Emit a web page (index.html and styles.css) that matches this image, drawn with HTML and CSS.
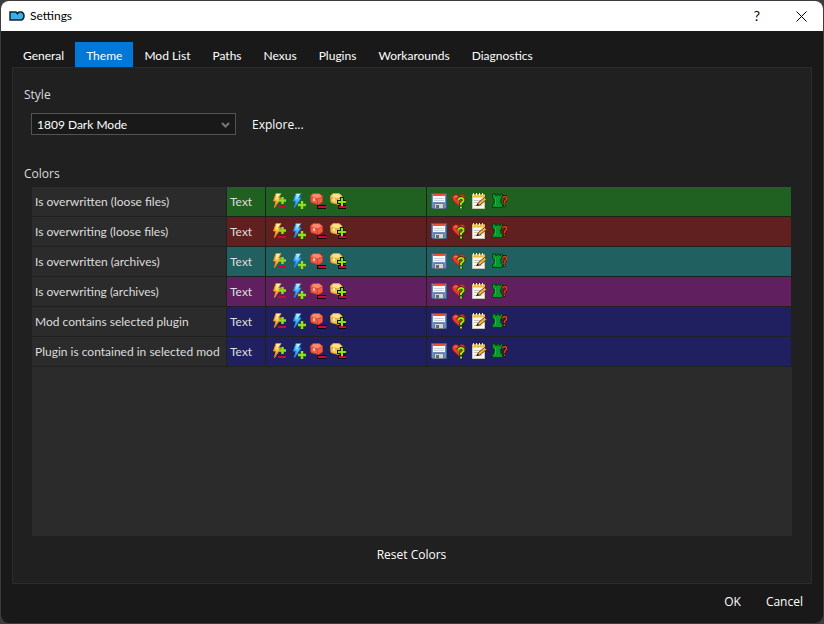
FILE: index.html
```html
<!DOCTYPE html>
<html lang="en">
<head>
<meta charset="utf-8">
<title>Settings</title>
<link rel="stylesheet" href="styles.css">
</head>
<body>
<svg class="defs" aria-hidden="true">
  <defs>
    <linearGradient id="g-fire" x1="0" y1="0" x2="0" y2="1"><stop offset="0" stop-color="#fff3a0"/><stop offset=".5" stop-color="#ffc050"/><stop offset="1" stop-color="#f08010"/></linearGradient>
    <linearGradient id="g-ice" x1="0" y1="0" x2="0" y2="1"><stop offset="0" stop-color="#b8ecff"/><stop offset=".5" stop-color="#48b8ff"/><stop offset="1" stop-color="#1484e8"/></linearGradient>
  </defs>
  <symbol id="fire" viewBox="0 0 16 16">
    <path d="M6 .5h5L8.500 5H11L4.500 14.500 6 8H3.500z" fill="url(#g-fire)" stroke="#e88c18"/>
    <path d="M7 1.500h2L7 5.500" fill="none" stroke="#fff8c0"/>
    <path d="M12.500 4v7M9 7.500h7" stroke="#589010" stroke-width="3"/>
    <path d="M12.500 4v7M9 7.500h7" stroke="#8ce020" stroke-width="2"/>
    <path d="M8 14h8" stroke="#c80838" stroke-width="2"/>
  </symbol>
  <symbol id="ice" viewBox="0 0 16 16">
    <path d="M6 .5h5L8.500 5H11L4.500 14.500 6 8H3.500z" fill="url(#g-ice)" stroke="#2090e8"/>
    <path d="M7 1.500h2L7 5.500" fill="none" stroke="#d0f4ff"/>
    <path d="M12 8v8M8 12h8" stroke="#589010" stroke-width="3"/>
    <path d="M12 8v8M8 12h8" stroke="#8ce020" stroke-width="2"/>
  </symbol>
  <symbol id="redbox" viewBox="0 0 16 16">
    <path d="M.5 3 3 .500h6L12.500 3v6L8.500 11.500 1 9.500z" fill="#f45c44" stroke="#d03c2c"/>
    <path d="M1.500 3 3.500 1H9l3 2.500-4.500 2z" fill="#ff8870"/>
    <path d="M7.500 6v5M1 5l6.500 1 4.500-2" fill="none" stroke="#d84434"/>
    <path d="M4 5v3" stroke="#ffd8d0" stroke-width="1.500"/>
    <path d="M7 12h9v4H7z" fill="#100808"/><path d="M8 13h8v2H8z" fill="#d00840"/>
  </symbol>
  <symbol id="goldbox" viewBox="0 0 16 16">
    <path d="M.5 3 3 .500h6L12 3v6L8.500 11.500 1 9.500z" fill="#f8c450" stroke="#dc9c2c"/>
    <path d="M1.500 3 3.500 1H9l2.500 2.500-4 2z" fill="#ffe08c"/>
    <path d="M7.500 6v5M1 5l6.500 1 4-2" fill="none" stroke="#dca030"/>
    <path d="M4 5v3" stroke="#fff8d8" stroke-width="1.500"/>
    <path d="M12 4v10M7 9h10" stroke="#102000" stroke-width="4"/>
    <path d="M8 12h9v4H8z" fill="#100808"/><path d="M9 13h7v2H9z" fill="#d00840"/>
    <path d="M12 5v8M8 9h8" stroke="#90e020" stroke-width="2"/>
  </symbol>
  <symbol id="floppy" viewBox="0 0 16 16">
    <path d="M.5.500h15v15h-14l-1-1z" fill="#6c8cbc" stroke="#3c5c94"/>
    <path d="M2 1h12v8H2z" fill="#f8f8fc"/><path d="M2 1h12v2H2z" fill="#f05030"/>
    <path d="M3 5.500h10M3 7.500h10" stroke="#c8d0dc"/>
    <path d="M3.500 10.500h9v5h-9z" fill="#d0d4d8" stroke="#707880"/><path d="M5 12h3v3H5z" fill="#606870"/>
  </symbol>
  <symbol id="heart" viewBox="0 0 16 16">
    <path d="M8 3.500C6 .500 1.500 1.500 1.500 5c0 3 4 5.500 6.500 8 2.500-2.500 6-5 6-8 0-3.500-4-4.500-6-1.500z" fill="#ec3c28" stroke="#b81c14"/>
    <path d="M3 4.500Q4 2.500 6 3.500" fill="none" stroke="#ff9880"/>
    <path d="M7 7.500Q8 5 10 5q3 0 2.500 3L10 10.500V12M10 13.500v2" fill="none" stroke="#142800" stroke-width="3.500"/>
    <path d="M7 7.500Q8 5 10 5q3 0 2.500 3L10 10.500V12M10 13.500v2" fill="none" stroke="#98e418" stroke-width="2"/>
  </symbol>
  <symbol id="note" viewBox="0 0 16 16">
    <path d="M1.500 2h12v13.500h-12z" fill="#f8f8f0" stroke="#c8c4b4"/>
    <path d="M1 1.500h13v3H1z" fill="#f0bc40"/>
    <path d="M2.500 0v3M5.500 0v3M8.500 0v3M11.500 0v3" stroke="#fff0a8"/>
    <path d="M3 7.500h8M3 9.500h6M3 12.500h8" stroke="#c4c4c4"/>
    <path d="M6 12.500 7.500 9.500 13.500 4.500l2 2L9 12z" fill="#f0b444" stroke="#684010"/>
    <path d="m5 13 1.500-2.500 1.500 1.500z" fill="#201008"/>
  </symbol>
  <symbol id="rook" viewBox="0 0 16 16">
    <path d="M1.500 1h3v1.500H6V1h2v1.500h1.500V1h2v4L9.500 6.500l.5 4 1.500 1v3h-10v-3l1.500-1 .5-4-2-1.500z" fill="#08982c" stroke="#044010"/>
    <path d="M4.500 5v7" stroke="#20b838"/>
    <path d="M11.500 5.500Q12 3.500 13.500 3.500q2.500 0 2 3L13.500 8.500v1.500M13.500 11.500v2" fill="none" stroke="#300800" stroke-width="3"/>
    <path d="M11.500 5.500Q12 3.500 13.500 3.500q2.500 0 2 3L13.500 8.500V10M13.500 11.500v1.500" fill="none" stroke="#e04410" stroke-width="1.500"/>
  </symbol>
</svg>
<main class="dialog">
  <header class="titlebar">
    <svg class="logo" viewBox="0 0 16 10" aria-hidden="true"><path d="M1 1h6l1.500 1L10 1h2.500Q15 2 15 5t-2.500 4H1z" fill="#38b0e8" stroke="#12252e" stroke-width="1.500"/><path d="m7 1.500 1.500 2L10 1.500" fill="none" stroke="#12252e"/></svg>
    <h1>Settings</h1>
    <button class="winbtn help" aria-label="Help">?</button>
    <button class="winbtn" aria-label="Close"><svg width="11" height="11" viewBox="0 0 11 11"><path d="m.5.500 10 10m0-10-10 10" stroke="#000"/></svg></button>
  </header>
  <nav class="tabs">
    <button>General</button><button class="active">Theme</button><button>Mod List</button><button>Paths</button><button>Nexus</button><button>Plugins</button><button>Workarounds</button><button>Diagnostics</button>
  </nav>
  <section class="panel">
    <label class="heading" for="style">Style</label>
    <div class="style-row">
      <div class="combo"><select id="style"><option>1809 Dark Mode</option></select><svg viewBox="0 0 9 6" aria-hidden="true"><path d="m1 1 3.500 3.500L8 1" fill="none" stroke="#777" stroke-width="2"/></svg></div>
      <button>Explore...</button>
    </div>
    <h2 class="heading">Colors</h2>
    <div class="table-area">
      <table>
        <colgroup><col class="c-name"><col class="c-text"><col class="c-content"><col></colgroup>
        <tbody>
          <tr class="green"><th scope="row">Is overwritten (loose files)</th><td>Text</td><td><div class="icons"><svg><use href="#fire"/></svg><svg><use href="#ice"/></svg><svg><use href="#redbox"/></svg><svg><use href="#goldbox"/></svg></div></td><td><div class="icons"><svg><use href="#floppy"/></svg><svg><use href="#heart"/></svg><svg><use href="#note"/></svg><svg><use href="#rook"/></svg></div></td></tr>
          <tr class="red"><th scope="row">Is overwriting (loose files)</th><td>Text</td><td><div class="icons"><svg><use href="#fire"/></svg><svg><use href="#ice"/></svg><svg><use href="#redbox"/></svg><svg><use href="#goldbox"/></svg></div></td><td><div class="icons"><svg><use href="#floppy"/></svg><svg><use href="#heart"/></svg><svg><use href="#note"/></svg><svg><use href="#rook"/></svg></div></td></tr>
          <tr class="teal"><th scope="row">Is overwritten (archives)</th><td>Text</td><td><div class="icons"><svg><use href="#fire"/></svg><svg><use href="#ice"/></svg><svg><use href="#redbox"/></svg><svg><use href="#goldbox"/></svg></div></td><td><div class="icons"><svg><use href="#floppy"/></svg><svg><use href="#heart"/></svg><svg><use href="#note"/></svg><svg><use href="#rook"/></svg></div></td></tr>
          <tr class="purple"><th scope="row">Is overwriting (archives)</th><td>Text</td><td><div class="icons"><svg><use href="#fire"/></svg><svg><use href="#ice"/></svg><svg><use href="#redbox"/></svg><svg><use href="#goldbox"/></svg></div></td><td><div class="icons"><svg><use href="#floppy"/></svg><svg><use href="#heart"/></svg><svg><use href="#note"/></svg><svg><use href="#rook"/></svg></div></td></tr>
          <tr class="navy"><th scope="row">Mod contains selected plugin</th><td>Text</td><td><div class="icons"><svg><use href="#fire"/></svg><svg><use href="#ice"/></svg><svg><use href="#redbox"/></svg><svg><use href="#goldbox"/></svg></div></td><td><div class="icons"><svg><use href="#floppy"/></svg><svg><use href="#heart"/></svg><svg><use href="#note"/></svg><svg><use href="#rook"/></svg></div></td></tr>
          <tr class="navy"><th scope="row">Plugin is contained in selected mod</th><td>Text</td><td><div class="icons"><svg><use href="#fire"/></svg><svg><use href="#ice"/></svg><svg><use href="#redbox"/></svg><svg><use href="#goldbox"/></svg></div></td><td><div class="icons"><svg><use href="#floppy"/></svg><svg><use href="#heart"/></svg><svg><use href="#note"/></svg><svg><use href="#rook"/></svg></div></td></tr>
        </tbody>
      </table>
    </div>
    <button class="reset">Reset Colors</button>
  </section>
  <footer class="actions"><button>OK</button><button>Cancel</button></footer>
</main>
</body>
</html>
```
FILE: styles.css
```css
* { box-sizing: border-box; }
body {
  margin: 0;
  min-height: 100vh;
  padding: 1px;
  display: flex;
  background: #3c3c40;
  color: #fff;
  font: 12px/16px "Open Sans", "Noto Sans", sans-serif;
}
button {
  border: 0;
  padding: 0;
  background: none;
  color: inherit;
  font: inherit;
}
svg { display: block; flex: none; }
.defs { position: absolute; width: 0; height: 0; }
.dialog {
  flex: 1;
  display: flex;
  flex-direction: column;
  border-radius: 8px;
  overflow: hidden;
  background: #191919;
}
.titlebar, .tabs, .combo, table { font-family: Lato, "Open Sans", sans-serif; }
.titlebar {
  display: flex;
  align-items: center;
  height: 30px;
  padding-left: 8px;
  background: #fff;
  color: #000;
}
.logo { width: 16px; height: 10px; }
h1 { flex: 1; margin: 0 0 0 5px; font: inherit; }
.winbtn {
  display: grid;
  place-items: center;
  width: 44px;
  height: 30px;
}
.help { font-size: 14px; }
.tabs {
  display: flex;
  height: 36px;
  padding: 11px 11px 0;
}
.tabs button { padding: 2px 11px 0; }
.tabs .active { background: #0078d7; }
.panel {
  flex: 1;
  display: flex;
  flex-direction: column;
  margin: 0 11px;
  padding: 19px 19px 20px 18px;
  border: 1px solid #2b2b2b;
  background: #202020;
}
.heading {
  margin: 0 0 0 -7px;
  color: #ddd;
  font: inherit;
}
.style-row {
  display: flex;
  gap: 16px;
  margin: 10px 0 31px;
}
.style-row button { padding-top: 2px; }
.combo {
  position: relative;
  width: 205px;
  height: 22px;
}
.combo select {
  appearance: none;
  width: 100%;
  height: 100%;
  padding: 1px 24px 0 5px;
  border: 1px solid #535353;
  border-radius: 0;
  background: #191919;
  color: #fff;
  font: inherit;
}
.combo svg {
  position: absolute;
  right: 6px;
  top: 9px;
  width: 9px;
  height: 6px;
}
.table-area {
  flex: 1;
  margin: 5px 0 0 1px;
  background: #2b2b2b;
}
table {
  width: 100%;
  table-layout: fixed;
  border-collapse: separate;
  border-spacing: 0;
  color: #ddd;
}
.c-name { width: 195px; }
.c-text { width: 39px; }
.c-content { width: 161px; }
th, td {
  height: 30px;
  padding: 0 3px;
  border: solid #202020;
  border-width: 0 1px 1px 0;
  text-align: left;
  white-space: nowrap;
  font-weight: 400;
}
.green td { background: #206020; }
.red td { background: #602020; }
.teal td { background: #206060; }
.purple td { background: #602060; }
.navy td { background: #202060; }
.icons { display: flex; gap: 4px; padding: 0 0 1px 1px; }
.icons svg { width: 16px; height: 16px; overflow: visible; }
.reset { align-self: center; margin-top: 11px; }
.actions {
  display: flex;
  justify-content: flex-end;
  gap: 25px;
  height: 39px;
  padding: 0 20px 4px 0;
}
```
